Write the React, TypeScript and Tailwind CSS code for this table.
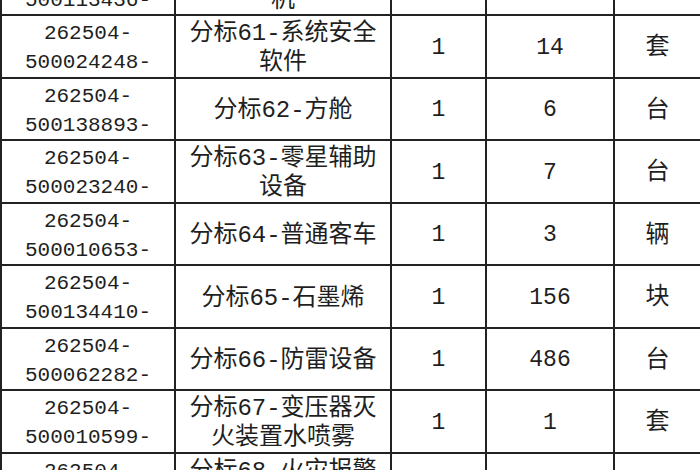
const rows = [
  { id: ["262504-", "500113436-"], name: ["分标60-工控一体", "机"], lots: "1", qty: "2", unit: "台" },
  { id: ["262504-", "500024248-"], name: ["分标61-系统安全", "软件"], lots: "1", qty: "14", unit: "套" },
  { id: ["262504-", "500138893-"], name: ["分标62-方舱"], lots: "1", qty: "6", unit: "台" },
  { id: ["262504-", "500023240-"], name: ["分标63-零星辅助", "设备"], lots: "1", qty: "7", unit: "台" },
  { id: ["262504-", "500010653-"], name: ["分标64-普通客车"], lots: "1", qty: "3", unit: "辆" },
  { id: ["262504-", "500134410-"], name: ["分标65-石墨烯"], lots: "1", qty: "156", unit: "块" },
  { id: ["262504-", "500062282-"], name: ["分标66-防雷设备"], lots: "1", qty: "486", unit: "台" },
  { id: ["262504-", "500010599-"], name: ["分标67-变压器灭", "火装置水喷雾"], lots: "1", qty: "1", unit: "套" },
  { id: ["262504-", "500028816-"], name: ["分标68-火灾报警", "主机"], lots: "1", qty: "5", unit: "台" },
]

const font = "font-['Liberation_Mono','Noto_Sans_CJK_SC',monospace]"

export default function App() {
  return (
    <div className={`w-[700px] h-[470px] overflow-hidden bg-white text-[#1f1f1f] ${font}`}>
      <div className="-mt-[46.5px] border-l-2 border-[#222]">
        {rows.map((row) => (
          <div
            key={row.id[1]}
            className="grid grid-cols-[174px_216px_95px_128px_1fr] h-[62.5px] border-b-2 border-[#222]"
          >
            <div className="flex flex-col items-center justify-center pt-[3px] border-r-2 border-[#222] text-[21px] leading-[29px]">
              {row.id.map((line) => (
                <span key={line}>{line}</span>
              ))}
            </div>
            <div className="flex flex-col items-center justify-center pt-[3px] border-r-2 border-[#222] text-[24px] leading-[29px]">
              {row.name.map((line) => (
                <span key={line}>{line}</span>
              ))}
            </div>
            <div className="flex items-center justify-center pt-[3px] border-r-2 border-[#222] text-[23px]">
              {row.lots}
            </div>
            <div className="flex items-center justify-center pt-[3px] border-r-2 border-[#222] text-[23px]">
              {row.qty}
            </div>
            <div className="flex items-center justify-center pt-[3px] text-[24px]">{row.unit}</div>
          </div>
        ))}
      </div>
    </div>
  )
}
